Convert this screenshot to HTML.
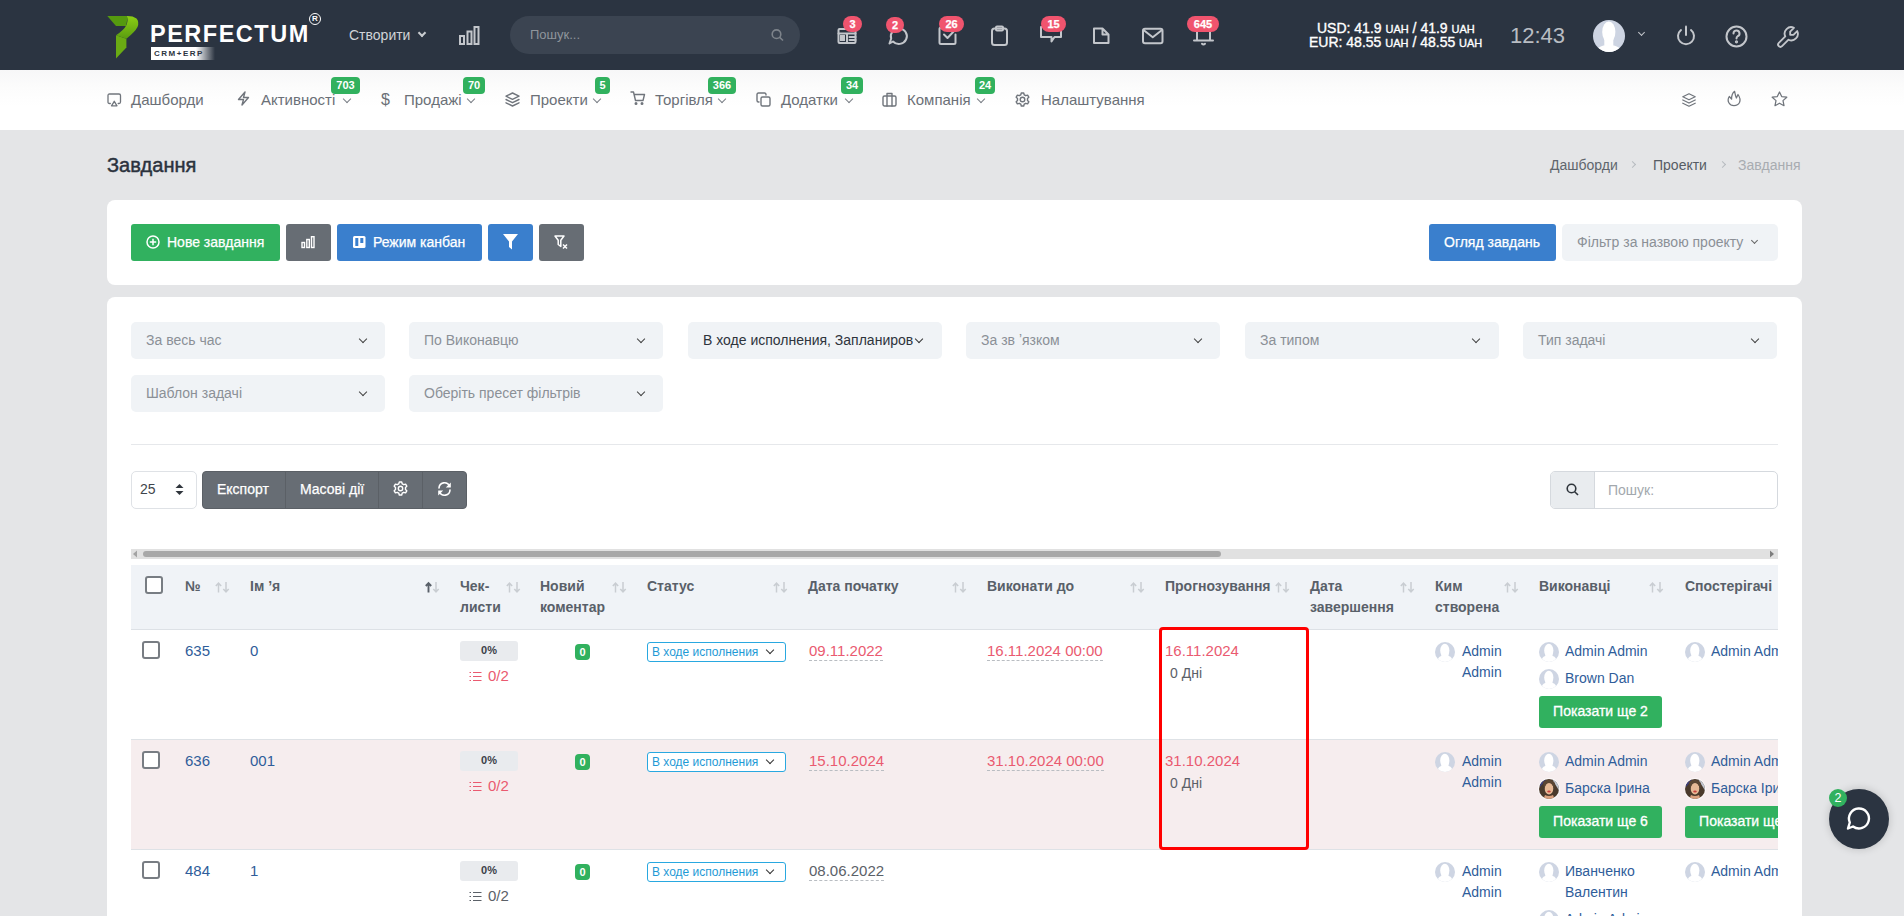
<!DOCTYPE html>
<html><head><meta charset="utf-8">
<style>
*{box-sizing:border-box;margin:0;padding:0}
html,body{width:1904px;height:916px;overflow:hidden}
body{font-family:"Liberation Sans",sans-serif;background:#e4e5e7;position:relative;color:#3f4750;font-size:14px}
.a{position:absolute;white-space:nowrap}
svg{position:absolute;overflow:visible}
#hdr{position:absolute;left:0;top:0;width:1904px;height:70px;background:#2b3441}
#nav{position:absolute;left:0;top:70px;width:1904px;height:60px;background:linear-gradient(#f7f7f8,#fcfcfc 30%,#fff 60%)}
.card{position:absolute;background:#fff;border-radius:8px}
.btn{position:absolute;height:37px;border-radius:3px;color:#fff;font-size:14px;line-height:37px}
.sel{position:absolute;height:37px;width:254px;background:#f0f3f6;border-radius:5px;color:#8b9096;font-size:14px;line-height:37px;padding-left:15px;white-space:nowrap;overflow:hidden}
.chev{position:absolute;width:6px;height:6px;border-right:1.6px solid #444;border-bottom:1.6px solid #444;transform:rotate(45deg)}
.rb{position:absolute;background:#f0546e;color:#fff;font-size:11px;font-weight:bold;-webkit-text-stroke:.25px #fff;height:16px;line-height:16px;border-radius:8px;text-align:center}
.gb{position:absolute;background:#31b15e;color:#fff;font-size:11px;font-weight:bold;height:17px;line-height:17px;border-radius:4px;text-align:center}
.nt{position:absolute;top:90px;font-size:15px;color:#6b7077;line-height:20px;white-space:nowrap}
.ni{position:absolute;top:92px}
.hi{stroke:#c3c6cb;fill:none;stroke-width:2;stroke-linecap:round;stroke-linejoin:round}
.ns{stroke:#70757c;fill:none;stroke-width:1.4;stroke-linecap:round;stroke-linejoin:round}
</style></head>
<body>
<div id="hdr"></div>
<div id="nav"></div>

<!-- ============ HEADER ============ -->
<!-- logo -->
<svg style="left:104px;top:12px" width="40" height="50" viewBox="0 0 40 50">
  <defs><linearGradient id="lg1" x1="0" y1="0" x2="0" y2="1"><stop offset="0" stop-color="#8ccf14"/><stop offset="1" stop-color="#5a9c10"/></linearGradient></defs>
  <path d="M3.3 4.1 L24 4.1 L22 13.9 L12 13.9 Z" fill="#559a0f"/>
  <path d="M12 23.2 L22.4 26.7 L22.4 35.5 L12 46.6 Z" fill="#6aab13"/>
  <path d="M23 4.1 Q29 4 32.5 6.5 Q35.5 10 33.5 15 Q31 20 22.4 26.7 L12 23.2 Q20 18 22.5 13 Q24.5 8 23 4.1 Z" fill="url(#lg1)"/>
</svg>
<div class="a" style="left:150px;top:22px;font-size:23.5px;font-weight:bold;color:#fff;letter-spacing:1.5px;line-height:24px">PERFECTUM</div>
<div class="a" style="left:309px;top:13px;width:12px;height:12px;border:1.5px solid #fff;border-radius:50%;font-size:8px;color:#fff;text-align:center;line-height:9px;font-weight:bold">R</div>
<div class="a" style="left:151px;top:47px;width:64px;height:13px;background:linear-gradient(90deg,#fff 70%,rgba(255,255,255,0));"></div>
<div class="a" style="left:154px;top:47px;font-size:8px;font-weight:bold;color:#2b3441;letter-spacing:1.5px;line-height:13px">CRM+ERP</div>

<div class="a" style="left:349px;top:27px;font-size:14px;color:#d0d3d7;line-height:16px">Створити</div>
<div class="chev" style="left:419px;top:30px;width:6px;height:6px;border-color:#c9ccd0;border-width:2px"></div>
<!-- chart icon -->
<svg style="left:459px;top:26px" width="22" height="19" viewBox="0 0 22 19"><g fill="none" stroke="#c3c6cb" stroke-width="2"><rect x="1" y="10" width="4" height="8"/><rect x="8.5" y="5.5" width="4" height="12.5"/><rect x="15.5" y="1" width="4" height="17"/></g></svg>
<!-- search -->
<div class="a" style="left:510px;top:16px;width:290px;height:38px;border-radius:19px;background:#3b4451"></div>
<div class="a" style="left:530px;top:27px;font-size:13px;color:#8f959c;line-height:16px">Пошук...</div>
<svg style="left:771px;top:29px" width="14" height="12" viewBox="0 0 14 12"><circle cx="5.5" cy="5.2" r="4.3" fill="none" stroke="#7d838a" stroke-width="1.6"/><path d="M8.7 8.4 L12 11.5" stroke="#7d838a" stroke-width="1.6"/></svg>

<!-- header icons -->
<svg style="left:837px;top:26px" width="20" height="18" viewBox="0 0 20 18"><g class="hi"><rect x="1.5" y="3" width="17" height="14" rx="1"/><path d="M1.5 7.5 H18.5 M10 7.5 V17 M12.5 11 H18.5 M12.5 14 H18.5"/><rect x="3" y="9" width="5" height="6" fill="#c3c6cb" stroke="none"/></g></svg>
<div class="rb" style="left:843px;top:16px;width:19px">3</div>
<svg style="left:888px;top:26px" width="20" height="19" viewBox="0 0 20 19"><path class="hi" d="M5 15.5 A8 7.8 0 1 0 3.2 12.5 L1.5 17.5 Z"/></svg>
<div class="rb" style="left:886px;top:17px;width:18px">2</div>
<svg style="left:938px;top:25px" width="20" height="20" viewBox="0 0 20 20"><g class="hi"><path d="M17.5 9.5 V17.5 Q17.5 19 16 19 H3 Q1.5 19 1.5 17.5 V4 Q1.5 2.5 3 2.5 H12"/><path d="M6 9.5 L9.5 13 L17 5"/></g></svg>
<div class="rb" style="left:939px;top:16px;width:25px">26</div>
<svg style="left:990px;top:25px" width="20" height="21" viewBox="0 0 20 21"><g class="hi"><rect x="2" y="3.5" width="15" height="16.5" rx="2.5"/><rect x="6" y="1.5" width="7" height="4" rx="1"/></g></svg>
<svg style="left:1039px;top:24px" width="24" height="22" viewBox="0 0 24 22"><g class="hi"><path d="M2 3 H22 V13 H15.5 L12.5 17.5 V13 H2 Z"/></g></svg>
<div class="rb" style="left:1041px;top:16px;width:25px">15</div>
<svg style="left:1092px;top:27px" width="19" height="19" viewBox="0 0 19 19"><g class="hi"><path d="M2 1.5 H10.5 L16.5 7.5 V16 H2 Z M10.5 1.5 V7.5 H16.5"/></g></svg>
<svg style="left:1141px;top:27px" width="23" height="18" viewBox="0 0 23 18"><g class="hi"><rect x="2" y="1.8" width="19.5" height="14.4" rx="2"/><path d="M2.5 3 L11.75 10.3 L21 3"/></g></svg>
<svg style="left:1192px;top:26px" width="23" height="20" viewBox="0 0 23 20"><g class="hi"><path d="M5 14 V5 M18 5 V14 M2 14.5 H21"/><path d="M10 17.8 Q11.5 19.3 13 17.8"/></g></svg>
<div class="rb" style="left:1187px;top:16px;width:32px">645</div>

<div class="a" style="left:1317px;top:20.5px;font-size:14px;color:#fff;line-height:15px;-webkit-text-stroke:.35px #fff">USD: 41.9 <span style="font-size:11px">UAH</span> / 41.9 <span style="font-size:11px">UAH</span></div>
<div class="a" style="left:1309px;top:35px;font-size:14px;color:#fff;line-height:15px;-webkit-text-stroke:.35px #fff">EUR: 48.55 <span style="font-size:11px">UAH</span> / 48.55 <span style="font-size:11px">UAH</span></div>
<div class="a" style="left:1510px;top:23.5px;font-size:22px;color:#b9bdc3;line-height:24px">12:43</div>
<!-- avatar -->
<svg style="left:1593px;top:20px" width="32" height="32" viewBox="0 0 32 32"><defs><clipPath id="hav"><circle cx="16" cy="16" r="16"/></clipPath></defs><g clip-path="url(#hav)"><rect width="32" height="32" fill="#cdd4e2"/><ellipse cx="15.8" cy="12" rx="6.6" ry="10.5" fill="#fff"/><rect x="11.3" y="18" width="9" height="9" fill="#fff"/><path d="M2 33 Q4 27 10.5 25.5 L21 25.5 Q27.5 27 30 33 Z" fill="#fff"/></g></svg>
<div class="chev" style="left:1639px;top:30px;width:5px;height:5px;border-color:#c3c6cb"></div>
<svg style="left:1676px;top:25px" width="20" height="22" viewBox="0 0 20 22"><g class="hi"><path d="M10 1.5 V10"/><path d="M5 5 A8 8 0 1 0 15 5"/></g></svg>
<svg style="left:1725px;top:25px" width="23" height="23" viewBox="0 0 23 23"><g class="hi"><circle cx="11.5" cy="11.5" r="10"/><path d="M8.5 8.5 A3 3 0 1 1 12.5 11.3 Q11.5 11.8 11.5 13.5"/><circle cx="11.5" cy="16.8" r=".6" fill="#c3c6cb"/></g></svg>
<svg style="left:1775px;top:24px" width="26" height="26" viewBox="0 0 24 24"><g transform="translate(24,0) scale(-1,1)"><path d="M7 10h3v-3l-3.5 -3.5a6 6 0 0 1 8 8l6 6a2 2 0 0 1 -3 3l-6 -6a6 6 0 0 1 -8 -8l3.5 3.5" fill="none" stroke="#c3c6cb" stroke-width="1.7" stroke-linejoin="round" stroke-linecap="round"/></g></svg>

<!-- ============ NAV ============ -->
<svg class="ni" style="left:107px;top:92.7px" width="15" height="14" viewBox="0 0 15 14"><g class="ns" style="stroke-width:1.3"><path d="M3.3 10.5 H2.5 Q1 10.5 1 9 V2.5 Q1 1 2.5 1 H12 Q13.5 1 13.5 2.5 V9 Q13.5 10.5 12 10.5 H11.2"/><path d="M7.25 8.3 L10 12.8 H4.5 Z"/></g></svg>
<div class="nt" style="left:131px">Дашборди</div>
<svg class="ni" style="left:237px;top:91px" width="13" height="15" viewBox="0 0 13 15"><path class="ns" d="M8 1 L1.5 8.5 H6.5 L5 14 L11.5 6.5 H6.5 Z"/></svg>
<div class="nt" style="left:261px">Активності</div>
<div class="chev" style="left:344px;top:96px;width:6px;height:6px;border-color:#7a7f86;border-width:1.1px"></div>
<div class="gb" style="left:331px;top:77px;width:29px">703</div>
<div class="nt" style="left:381px;font-size:16px">$</div>
<div class="nt" style="left:404px">Продажі</div>
<div class="chev" style="left:468px;top:96px;width:6px;height:6px;border-color:#7a7f86;border-width:1.1px"></div>
<div class="gb" style="left:463px;top:77px;width:22px">70</div>
<svg class="ni" style="left:505px;top:92px" width="15" height="15" viewBox="0 0 15 15"><g class="ns"><path d="M7.5 1 L14 4.2 L7.5 7.4 L1 4.2 Z"/><path d="M1 7.5 L7.5 10.7 L14 7.5"/><path d="M1 10.8 L7.5 14 L14 10.8"/></g></svg>
<div class="nt" style="left:530px">Проекти</div>
<div class="chev" style="left:594px;top:96px;width:6px;height:6px;border-color:#7a7f86;border-width:1.1px"></div>
<div class="gb" style="left:595px;top:77px;width:15px">5</div>
<svg class="ni" style="left:630px;top:91px" width="16" height="14" viewBox="0 0 16 14"><g class="ns"><path d="M1 1 H3.5 L5.5 9.5 H13 L14.5 3.5 H4.3"/><circle cx="6" cy="12.5" r=".8" fill="#70757c"/><circle cx="12" cy="12.5" r=".8" fill="#70757c"/></g></svg>
<div class="nt" style="left:655px">Торгівля</div>
<div class="chev" style="left:719px;top:96px;width:6px;height:6px;border-color:#7a7f86;border-width:1.1px"></div>
<div class="gb" style="left:708px;top:77px;width:28px">366</div>
<svg class="ni" style="left:756px;top:92px" width="15" height="15" viewBox="0 0 15 15"><g class="ns"><rect x="5" y="5" width="9" height="9" rx="1.5"/><path d="M10 3 V2.5 Q10 1 8.5 1 H2.5 Q1 1 1 2.5 V8.5 Q1 10 2.5 10 H3"/></g></svg>
<div class="nt" style="left:781px">Додатки</div>
<div class="chev" style="left:846px;top:96px;width:6px;height:6px;border-color:#7a7f86;border-width:1.1px"></div>
<div class="gb" style="left:841px;top:77px;width:22px">34</div>
<svg class="ni" style="left:882px;top:92px" width="15" height="15" viewBox="0 0 15 15"><g class="ns"><rect x="1" y="4" width="13" height="10" rx="1.5"/><path d="M5 14 V1.5 H10 V14"/></g></svg>
<div class="nt" style="left:907px">Компанія</div>
<div class="chev" style="left:978px;top:96px;width:6px;height:6px;border-color:#7a7f86;border-width:1.1px"></div>
<div class="gb" style="left:975px;top:77px;width:20px">24</div>
<svg class="ni" style="left:1015px;top:92px" width="15" height="15" viewBox="0 0 15 15"><g class="ns"><circle cx="7.5" cy="7.5" r="2.3"/><path d="M6.3 1 H8.7 L9.2 2.8 L10.8 3.7 L12.6 3.1 L13.8 5.2 L12.5 6.5 V8.5 L13.8 9.8 L12.6 11.9 L10.8 11.3 L9.2 12.2 L8.7 14 H6.3 L5.8 12.2 L4.2 11.3 L2.4 11.9 L1.2 9.8 L2.5 8.5 V6.5 L1.2 5.2 L2.4 3.1 L4.2 3.7 L5.8 2.8 Z"/></g></svg>
<div class="nt" style="left:1041px">Налаштування</div>
<!-- nav right icons -->
<svg style="left:1682px;top:92.5px" width="14" height="14" viewBox="0 0 14 14"><g class="ns" style="stroke-width:1.25"><path d="M7 0.8 L13.2 3.8 L7 6.8 L0.8 3.8 Z"/><path d="M0.8 7 L7 10 L13.2 7"/><path d="M0.8 10.2 L7 13.2 L13.2 10.2"/></g></svg>
<svg style="left:1722px;top:86px" width="24" height="24" viewBox="0 0 24 24"><path d="M12.6 5.3 C10.5 7 9.5 10 9.6 13.2 L7.3 10.5 C6 12.5 5.8 15 7 17 C8 18.8 10 19.6 12 19.6 C14.5 19.6 16.5 18.5 17.5 16.5 C18.3 14.5 17.8 11 16 8.5 L14.4 12 C13.5 10 13 7.5 12.6 5.3 Z" fill="none" stroke="#70757c" stroke-width="1.25" stroke-linejoin="round" stroke-linecap="round"/></svg>
<svg style="left:1770.5px;top:91px" width="17" height="16" viewBox="0 0 17 16"><path class="ns" style="stroke-width:1.25" d="M8.5 1 L10.7 5.6 L15.8 6.2 L12 9.6 L13 14.7 L8.5 12.2 L4 14.7 L5 9.6 L1.2 6.2 L6.3 5.6 Z"/></svg>

<!-- ============ PAGE TITLE ============ -->
<div class="a" style="left:107px;top:154px;font-size:20px;color:#2b323d;line-height:22px;-webkit-text-stroke:.45px #2b323d">Завдання</div>
<div class="a" style="left:1550px;top:157px;font-size:14px;color:#60666d;line-height:16px">Дашборди</div>
<div class="chev" style="left:1630px;top:162px;width:5px;height:5px;border-color:#b7bbc0;border-width:1px;transform:rotate(-45deg)"></div>
<div class="a" style="left:1653px;top:157px;font-size:14px;color:#565c64;line-height:16px">Проекти</div>
<div class="chev" style="left:1720px;top:162px;width:5px;height:5px;border-color:#b7bbc0;border-width:1px;transform:rotate(-45deg)"></div>
<div class="a" style="left:1738px;top:157px;font-size:14px;color:#a8acb1;line-height:16px">Завдання</div>

<!-- ============ CARD 1 ============ -->
<div class="card" style="left:107px;top:200px;width:1695px;height:85px"></div>
<div class="btn" style="left:131px;top:224px;width:149px;background:#31b15f"></div>
<svg style="left:146px;top:235px" width="14" height="14" viewBox="0 0 14 14"><g fill="none" stroke="#fff" stroke-width="1.5"><circle cx="7" cy="7" r="6"/><path d="M7 3.8 V10.2 M3.8 7 H10.2"/></g></svg>
<div class="a" style="left:167px;top:234px;font-size:14px;color:#fff;line-height:16px;-webkit-text-stroke:.25px #fff">Нове завдання</div>
<div class="btn" style="left:286px;top:224px;width:45px;background:#676d74"></div>
<svg style="left:301px;top:236px" width="14" height="12" viewBox="0 0 14 12"><g fill="none" stroke="#fff" stroke-width="1.4"><rect x="1" y="6.5" width="2.5" height="5"/><rect x="5.8" y="3.5" width="2.5" height="8"/><rect x="10.5" y="0.7" width="2.5" height="10.8"/></g></svg>
<div class="btn" style="left:337px;top:224px;width:145px;background:#3a7fcd"></div>
<svg style="left:353px;top:236px" width="13" height="12" viewBox="0 0 13 12"><rect x="0" y="0" width="12.5" height="12" rx="1.5" fill="#fff"/><rect x="2.3" y="2" width="3" height="8" fill="#3a7fcd"/><rect x="7.3" y="2" width="3" height="5" fill="#3a7fcd"/></svg>
<div class="a" style="left:373px;top:234px;font-size:14px;color:#fff;line-height:16px;-webkit-text-stroke:.25px #fff">Режим канбан</div>
<div class="btn" style="left:488px;top:224px;width:45px;background:#3a7fcd"></div>
<svg style="left:503px;top:234px" width="15" height="16" viewBox="0 0 15 16"><path d="M0 0 H15 L9 7.5 V15.5 L6 13 V7.5 Z" fill="#fff"/></svg>
<div class="btn" style="left:539px;top:224px;width:45px;background:#676d74"></div>
<svg style="left:554px;top:235px" width="15" height="15" viewBox="0 0 15 15"><g fill="none" stroke="#fff" stroke-width="1.5" stroke-linejoin="round"><path d="M1 1 H10 L6.8 5.2 V11.5 L4.2 9.5 V5.2 Z"/><path d="M9 9.5 L13 13.5 M13 9.5 L9 13.5"/></g></svg>

<div class="btn" style="left:1429px;top:224px;width:127px;background:#3a7fcd"></div>
<div class="a" style="left:1444px;top:234px;font-size:14px;color:#fff;line-height:16px;-webkit-text-stroke:.25px #fff">Огляд завдань</div>
<div class="sel" style="left:1562px;top:224px;width:216px;color:#8b9096">Фільтр за назвою проекту</div>
<div class="chev" style="left:1752px;top:238px;width:5px;height:5px;border-color:#666;border-width:1.3px"></div>

<!-- ============ CARD 2 ============ -->
<div class="card" style="left:107px;top:297px;width:1695px;height:700px"></div>
<div class="sel" style="left:131px;top:322px">За весь час</div><div class="chev" style="left:360px;top:336px"></div>
<div class="sel" style="left:409px;top:322px">По Виконавцю</div><div class="chev" style="left:638px;top:336px"></div>
<div class="sel" style="left:688px;top:322px;color:#2e343c">В ходе исполнения, Запланиров</div><div class="chev" style="left:916px;top:336px;border-color:#333"></div>
<div class="sel" style="left:966px;top:322px">За зв ʼязком</div><div class="chev" style="left:1195px;top:336px"></div>
<div class="sel" style="left:1245px;top:322px">За типом</div><div class="chev" style="left:1473px;top:336px"></div>
<div class="sel" style="left:1523px;top:322px">Тип задачі</div><div class="chev" style="left:1752px;top:336px"></div>
<div class="sel" style="left:131px;top:375px">Шаблон задачі</div><div class="chev" style="left:360px;top:389px"></div>
<div class="sel" style="left:409px;top:375px">Оберіть пресет фільтрів</div><div class="chev" style="left:638px;top:389px"></div>
<div class="a" style="left:131px;top:444px;width:1647px;height:1px;background:#e6e8eb"></div>

<!-- toolbar -->
<div class="a" style="left:131px;top:471px;width:66px;height:38px;border:1px solid #dfe2e6;border-radius:5px;background:#fff"></div>
<div class="a" style="left:140px;top:481px;font-size:14px;color:#3f454c;line-height:16px">25</div>
<svg style="left:175px;top:484px" width="9" height="11" viewBox="0 0 9 11"><path d="M4.5 0 L8.5 4 H0.5 Z M4.5 11 L8.5 7 H0.5 Z" fill="#2f353c"/></svg>
<div class="a" style="left:202px;top:471px;width:265px;height:38px;background:#676d74;border-radius:4px;border:1px solid #5b6066"></div>
<div class="a" style="left:285px;top:471px;width:1px;height:38px;background:#5b6066"></div>
<div class="a" style="left:378px;top:471px;width:1px;height:38px;background:#5b6066"></div>
<div class="a" style="left:422px;top:471px;width:1px;height:38px;background:#5b6066"></div>
<div class="a" style="left:217px;top:481px;font-size:14px;color:#fff;line-height:16px;-webkit-text-stroke:.25px #fff">Експорт</div>
<div class="a" style="left:300px;top:481px;font-size:14px;color:#fff;line-height:16px;-webkit-text-stroke:.25px #fff">Масові дії</div>
<svg style="left:393px;top:481px" width="15" height="15" viewBox="0 0 15 15"><g fill="none" stroke="#fff" stroke-width="1.4" stroke-linejoin="round"><circle cx="7.5" cy="7.5" r="2.2"/><path d="M6.3 1 H8.7 L9.2 2.8 L10.8 3.7 L12.6 3.1 L13.8 5.2 L12.5 6.5 V8.5 L13.8 9.8 L12.6 11.9 L10.8 11.3 L9.2 12.2 L8.7 14 H6.3 L5.8 12.2 L4.2 11.3 L2.4 11.9 L1.2 9.8 L2.5 8.5 V6.5 L1.2 5.2 L2.4 3.1 L4.2 3.7 L5.8 2.8 Z"/></g></svg>
<svg style="left:437px;top:482px" width="15" height="14" viewBox="0 0 15 14"><g fill="none" stroke="#fff" stroke-width="1.6" stroke-linecap="round"><path d="M2 6 A5.5 5.5 0 0 1 12.5 4"/><path d="M13 8 A5.5 5.5 0 0 1 2.5 10"/></g><path d="M13.8 0.5 V5.5 H8.8 Z M1.2 13.5 V8.5 H6.2 Z" fill="#fff"/></svg>

<div class="a" style="left:1550px;top:471px;width:228px;height:38px;border:1px solid #d5d9de;border-radius:5px;background:#fff;overflow:hidden">
  <div class="a" style="left:0;top:0;width:44px;height:36px;background:#e9ecef;border-right:1px solid #d5d9de"></div>
</div>
<svg style="left:1566px;top:483px" width="13" height="13" viewBox="0 0 13 13"><circle cx="5.5" cy="5.5" r="4.3" fill="none" stroke="#2f353c" stroke-width="1.6"/><path d="M8.7 8.7 L12 12" stroke="#2f353c" stroke-width="1.6"/></svg>
<div class="a" style="left:1608px;top:482px;font-size:14px;color:#a3a8ad;line-height:16px">Пошук:</div>

<!-- scrollbar -->
<div class="a" style="left:131px;top:549px;width:1647px;height:10px;background:#e1e1e1"></div>
<div class="a" style="left:143px;top:551px;width:1078px;height:6px;background:#a8a8a8;border-radius:3px"></div>
<svg style="left:132px;top:550px" width="6" height="8" viewBox="0 0 6 8"><path d="M5 0.5 V7.5 L1 4 Z" fill="#a3a3a3"/></svg>
<svg style="left:1769px;top:550px" width="6" height="8" viewBox="0 0 6 8"><path d="M1 0.5 V7.5 L5 4 Z" fill="#7d7d7d"/></svg>

<!-- TABLE -->
<div class="a" style="left:131px;top:565px;width:1647px;height:65px;background:#f0f3f7;border-bottom:1px solid #dde1e6"></div>
<!-- TABLE_HEAD -->
<div class="a" style="left:145px;top:576px;width:18px;height:18px;border:2px solid #787d83;border-radius:3px;background:#fff"></div>
<div class="a" style="left:185px;top:576px;font-size:14px;font-weight:bold;color:#596069;line-height:21px">№</div>
<svg style="left:215px;top:582px" width="15" height="11" viewBox="0 0 15 11"><g fill="none" stroke-width="1.5"><path d="M3.5 10.5 V1.2 M0.8 4 L3.5 1.2 L6.2 4" stroke="#c9cdd2" stroke-width="1.5"/><path d="M11 0 V9.8 M8.3 7 L11 9.8 L13.7 7" stroke="#c9cdd2"/></g></svg>
<div class="a" style="left:250px;top:576px;font-size:14px;font-weight:bold;color:#596069;line-height:21px">Ім ʼя</div>
<svg style="left:425px;top:582px" width="15" height="11" viewBox="0 0 15 11"><g fill="none" stroke-width="1.5"><path d="M3.5 10.5 V1.2 M0.8 4 L3.5 1.2 L6.2 4" stroke="#596069" stroke-width="1.9"/><path d="M11 0 V9.8 M8.3 7 L11 9.8 L13.7 7" stroke="#c9cdd2"/></g></svg>
<div class="a" style="left:460px;top:576px;font-size:14px;font-weight:bold;color:#596069;line-height:21px">Чек-<br>листи</div>
<svg style="left:506px;top:582px" width="15" height="11" viewBox="0 0 15 11"><g fill="none" stroke-width="1.5"><path d="M3.5 10.5 V1.2 M0.8 4 L3.5 1.2 L6.2 4" stroke="#c9cdd2" stroke-width="1.5"/><path d="M11 0 V9.8 M8.3 7 L11 9.8 L13.7 7" stroke="#c9cdd2"/></g></svg>
<div class="a" style="left:540px;top:576px;font-size:14px;font-weight:bold;color:#596069;line-height:21px">Новий<br>коментар</div>
<svg style="left:612px;top:582px" width="15" height="11" viewBox="0 0 15 11"><g fill="none" stroke-width="1.5"><path d="M3.5 10.5 V1.2 M0.8 4 L3.5 1.2 L6.2 4" stroke="#c9cdd2" stroke-width="1.5"/><path d="M11 0 V9.8 M8.3 7 L11 9.8 L13.7 7" stroke="#c9cdd2"/></g></svg>
<div class="a" style="left:647px;top:576px;font-size:14px;font-weight:bold;color:#596069;line-height:21px">Статус</div>
<svg style="left:773px;top:582px" width="15" height="11" viewBox="0 0 15 11"><g fill="none" stroke-width="1.5"><path d="M3.5 10.5 V1.2 M0.8 4 L3.5 1.2 L6.2 4" stroke="#c9cdd2" stroke-width="1.5"/><path d="M11 0 V9.8 M8.3 7 L11 9.8 L13.7 7" stroke="#c9cdd2"/></g></svg>
<div class="a" style="left:808px;top:576px;font-size:14px;font-weight:bold;color:#596069;line-height:21px">Дата початку</div>
<svg style="left:952px;top:582px" width="15" height="11" viewBox="0 0 15 11"><g fill="none" stroke-width="1.5"><path d="M3.5 10.5 V1.2 M0.8 4 L3.5 1.2 L6.2 4" stroke="#c9cdd2" stroke-width="1.5"/><path d="M11 0 V9.8 M8.3 7 L11 9.8 L13.7 7" stroke="#c9cdd2"/></g></svg>
<div class="a" style="left:987px;top:576px;font-size:14px;font-weight:bold;color:#596069;line-height:21px">Виконати до</div>
<svg style="left:1130px;top:582px" width="15" height="11" viewBox="0 0 15 11"><g fill="none" stroke-width="1.5"><path d="M3.5 10.5 V1.2 M0.8 4 L3.5 1.2 L6.2 4" stroke="#c9cdd2" stroke-width="1.5"/><path d="M11 0 V9.8 M8.3 7 L11 9.8 L13.7 7" stroke="#c9cdd2"/></g></svg>
<div class="a" style="left:1165px;top:576px;font-size:14px;font-weight:bold;color:#596069;line-height:21px">Прогнозування</div>
<svg style="left:1275px;top:582px" width="15" height="11" viewBox="0 0 15 11"><g fill="none" stroke-width="1.5"><path d="M3.5 10.5 V1.2 M0.8 4 L3.5 1.2 L6.2 4" stroke="#c9cdd2" stroke-width="1.5"/><path d="M11 0 V9.8 M8.3 7 L11 9.8 L13.7 7" stroke="#c9cdd2"/></g></svg>
<div class="a" style="left:1310px;top:576px;font-size:14px;font-weight:bold;color:#596069;line-height:21px">Дата<br>завершення</div>
<svg style="left:1400px;top:582px" width="15" height="11" viewBox="0 0 15 11"><g fill="none" stroke-width="1.5"><path d="M3.5 10.5 V1.2 M0.8 4 L3.5 1.2 L6.2 4" stroke="#c9cdd2" stroke-width="1.5"/><path d="M11 0 V9.8 M8.3 7 L11 9.8 L13.7 7" stroke="#c9cdd2"/></g></svg>
<div class="a" style="left:1435px;top:576px;font-size:14px;font-weight:bold;color:#596069;line-height:21px">Ким<br>створена</div>
<svg style="left:1504px;top:582px" width="15" height="11" viewBox="0 0 15 11"><g fill="none" stroke-width="1.5"><path d="M3.5 10.5 V1.2 M0.8 4 L3.5 1.2 L6.2 4" stroke="#c9cdd2" stroke-width="1.5"/><path d="M11 0 V9.8 M8.3 7 L11 9.8 L13.7 7" stroke="#c9cdd2"/></g></svg>
<div class="a" style="left:1539px;top:576px;font-size:14px;font-weight:bold;color:#596069;line-height:21px">Виконавці</div>
<svg style="left:1649px;top:582px" width="15" height="11" viewBox="0 0 15 11"><g fill="none" stroke-width="1.5"><path d="M3.5 10.5 V1.2 M0.8 4 L3.5 1.2 L6.2 4" stroke="#c9cdd2" stroke-width="1.5"/><path d="M11 0 V9.8 M8.3 7 L11 9.8 L13.7 7" stroke="#c9cdd2"/></g></svg>
<div class="a" style="left:1685px;top:576px;font-size:14px;font-weight:bold;color:#596069;line-height:21px">Спостерігачі</div>
<div class="a" style="left:131px;top:630px;width:1647px;height:110px;border-bottom:1px solid #dee2e6"></div>
<div class="a" style="left:142px;top:641px;width:18px;height:18px;border:2px solid #787d83;border-radius:3px;background:#fff"></div>
<div class="a" style="left:185px;top:643px;font-size:15px;color:#2f5d9a;line-height:16px">635</div>
<div class="a" style="left:250px;top:643px;font-size:15px;color:#2f5d9a;line-height:16px">0</div>
<div class="a" style="left:460px;top:641px;width:58px;height:20px;background:#e9ebee;border-radius:3px;font-size:11px;font-weight:bold;color:#3a4048;text-align:center;line-height:18px">0%</div>
<svg style="left:469px;top:671px" width="13" height="11" viewBox="0 0 13 11"><g stroke="#ea5a70" stroke-width="1.2"><path d="M4 1.5 H12.5 M4 5.5 H12.5 M4 9.5 H12.5"/><path d="M0.5 1.5 H2 M0.5 5.5 H2 M0.5 9.5 H2"/></g></svg>
<div class="a" style="left:488px;top:668px;font-size:15px;color:#ea5a70;line-height:16px">0/2</div>
<div class="gb" style="left:575px;top:644px;width:15px;height:16px;line-height:16px;font-size:11px">0</div>
<div class="a" style="left:647px;top:642px;width:139px;height:20px;border:1.5px solid #29a8e0;border-radius:3px;background:#fff"></div>
<div class="a" style="left:652px;top:645px;font-size:12px;color:#1e9ad6;line-height:14px">В ходе исполнения</div>
<div class="chev" style="left:767px;top:647px;width:6px;height:6px;border-color:#333;border-width:1.4px"></div>
<div class="a" style="left:809px;top:643px;font-size:15px;color:#ea5a70;line-height:16px;border-bottom:1px dashed #b9bdc2;padding-bottom:1px">09.11.2022</div>
<div class="a" style="left:987px;top:643px;font-size:15px;color:#ea5a70;line-height:16px;border-bottom:1px dashed #b9bdc2;padding-bottom:1px">16.11.2024 00:00</div>
<div class="a" style="left:1165px;top:643px;font-size:15px;color:#ea5a70;line-height:16px">16.11.2024</div>
<div class="a" style="left:1170px;top:665px;font-size:14px;color:#5b6168;line-height:16px">0 Дні</div>
<svg style="left:1435px;top:642px" width="20" height="20" viewBox="0 0 20 20"><defs><clipPath id="cp1"><circle cx="10" cy="10" r="10"/></clipPath></defs><g clip-path="url(#cp1)"><rect width="20" height="20" fill="#ced5e3"/><ellipse cx="9.8" cy="8.6" rx="4.6" ry="6.8" fill="#fff"/><path d="M2 20 Q3 14.5 6.5 14 L13.5 14 Q17 14.5 18 20 Z" fill="#fff"/><rect x="6.5" y="11" width="7" height="5" fill="#fff"/></g></svg>
<div class="a" style="left:1462px;top:641px;font-size:14px;color:#2f5d9a;line-height:21px">Admin<br>Admin</div>
<svg style="left:1539px;top:642px" width="20" height="20" viewBox="0 0 20 20"><defs><clipPath id="cp2"><circle cx="10" cy="10" r="10"/></clipPath></defs><g clip-path="url(#cp2)"><rect width="20" height="20" fill="#ced5e3"/><ellipse cx="9.8" cy="8.6" rx="4.6" ry="6.8" fill="#fff"/><path d="M2 20 Q3 14.5 6.5 14 L13.5 14 Q17 14.5 18 20 Z" fill="#fff"/><rect x="6.5" y="11" width="7" height="5" fill="#fff"/></g></svg>
<div class="a" style="left:1565px;top:641px;font-size:14px;color:#2f5d9a;line-height:21px">Admin Admin</div>
<svg style="left:1539px;top:669px" width="20" height="20" viewBox="0 0 20 20"><defs><clipPath id="cp3"><circle cx="10" cy="10" r="10"/></clipPath></defs><g clip-path="url(#cp3)"><rect width="20" height="20" fill="#ced5e3"/><ellipse cx="9.8" cy="8.6" rx="4.6" ry="6.8" fill="#fff"/><path d="M2 20 Q3 14.5 6.5 14 L13.5 14 Q17 14.5 18 20 Z" fill="#fff"/><rect x="6.5" y="11" width="7" height="5" fill="#fff"/></g></svg>
<div class="a" style="left:1565px;top:668px;font-size:14px;color:#2f5d9a;line-height:21px">Brown Dan</div>
<div class="a" style="left:1539px;top:696px;width:123px;height:32px;background:#31b15f;border-radius:3px;color:#fff;font-size:14px;line-height:30px;text-align:center;-webkit-text-stroke:.3px #fff">Показати ще 2</div>
<div class="a" style="left:1685px;top:629px;width:93px;height:109px;overflow:hidden">
<svg style="left:0px;top:13px" width="20" height="20" viewBox="0 0 20 20"><defs><clipPath id="cp4"><circle cx="10" cy="10" r="10"/></clipPath></defs><g clip-path="url(#cp4)"><rect width="20" height="20" fill="#ced5e3"/><ellipse cx="9.8" cy="8.6" rx="4.6" ry="6.8" fill="#fff"/><path d="M2 20 Q3 14.5 6.5 14 L13.5 14 Q17 14.5 18 20 Z" fill="#fff"/><rect x="6.5" y="11" width="7" height="5" fill="#fff"/></g></svg>
<div class="a" style="left:26px;top:12px;font-size:14px;color:#2f5d9a;line-height:21px">Admin Admin</div>
</div>
<div class="a" style="left:131px;top:740px;width:1647px;height:110px;background:#f6edee;border-bottom:1px solid #dee2e6"></div>
<div class="a" style="left:142px;top:751px;width:18px;height:18px;border:2px solid #787d83;border-radius:3px;background:#fff"></div>
<div class="a" style="left:185px;top:753px;font-size:15px;color:#2f5d9a;line-height:16px">636</div>
<div class="a" style="left:250px;top:753px;font-size:15px;color:#2f5d9a;line-height:16px">001</div>
<div class="a" style="left:460px;top:751px;width:58px;height:20px;background:#e9ebee;border-radius:3px;font-size:11px;font-weight:bold;color:#3a4048;text-align:center;line-height:18px">0%</div>
<svg style="left:469px;top:781px" width="13" height="11" viewBox="0 0 13 11"><g stroke="#ea5a70" stroke-width="1.2"><path d="M4 1.5 H12.5 M4 5.5 H12.5 M4 9.5 H12.5"/><path d="M0.5 1.5 H2 M0.5 5.5 H2 M0.5 9.5 H2"/></g></svg>
<div class="a" style="left:488px;top:778px;font-size:15px;color:#ea5a70;line-height:16px">0/2</div>
<div class="gb" style="left:575px;top:754px;width:15px;height:16px;line-height:16px;font-size:11px">0</div>
<div class="a" style="left:647px;top:752px;width:139px;height:20px;border:1.5px solid #29a8e0;border-radius:3px;background:#fff"></div>
<div class="a" style="left:652px;top:755px;font-size:12px;color:#1e9ad6;line-height:14px">В ходе исполнения</div>
<div class="chev" style="left:767px;top:757px;width:6px;height:6px;border-color:#333;border-width:1.4px"></div>
<div class="a" style="left:809px;top:753px;font-size:15px;color:#ea5a70;line-height:16px;border-bottom:1px dashed #b9bdc2;padding-bottom:1px">15.10.2024</div>
<div class="a" style="left:987px;top:753px;font-size:15px;color:#ea5a70;line-height:16px;border-bottom:1px dashed #b9bdc2;padding-bottom:1px">31.10.2024 00:00</div>
<div class="a" style="left:1165px;top:753px;font-size:15px;color:#ea5a70;line-height:16px">31.10.2024</div>
<div class="a" style="left:1170px;top:775px;font-size:14px;color:#5b6168;line-height:16px">0 Дні</div>
<svg style="left:1435px;top:752px" width="20" height="20" viewBox="0 0 20 20"><defs><clipPath id="cp5"><circle cx="10" cy="10" r="10"/></clipPath></defs><g clip-path="url(#cp5)"><rect width="20" height="20" fill="#ced5e3"/><ellipse cx="9.8" cy="8.6" rx="4.6" ry="6.8" fill="#fff"/><path d="M2 20 Q3 14.5 6.5 14 L13.5 14 Q17 14.5 18 20 Z" fill="#fff"/><rect x="6.5" y="11" width="7" height="5" fill="#fff"/></g></svg>
<div class="a" style="left:1462px;top:751px;font-size:14px;color:#2f5d9a;line-height:21px">Admin<br>Admin</div>
<svg style="left:1539px;top:752px" width="20" height="20" viewBox="0 0 20 20"><defs><clipPath id="cp6"><circle cx="10" cy="10" r="10"/></clipPath></defs><g clip-path="url(#cp6)"><rect width="20" height="20" fill="#ced5e3"/><ellipse cx="9.8" cy="8.6" rx="4.6" ry="6.8" fill="#fff"/><path d="M2 20 Q3 14.5 6.5 14 L13.5 14 Q17 14.5 18 20 Z" fill="#fff"/><rect x="6.5" y="11" width="7" height="5" fill="#fff"/></g></svg>
<div class="a" style="left:1565px;top:751px;font-size:14px;color:#2f5d9a;line-height:21px">Admin Admin</div>
<svg style="left:1538px;top:778px" width="22" height="22" viewBox="0 0 22 22"><defs><clipPath id="cp7"><circle cx="11" cy="11" r="10"/></clipPath></defs><circle cx="11" cy="11" r="11" fill="#fff" opacity=".6"/><g clip-path="url(#cp7)"><rect width="22" height="22" fill="#4a3a2c"/><path d="M14 1 L22 0 L22 14 Z" fill="#c3c8d2"/><path d="M1 2 Q5 0 8 2 L2 9 Z" fill="#3d3f7a"/><ellipse cx="11" cy="10.5" rx="4.3" ry="6" fill="#e7b996"/><ellipse cx="11" cy="13.5" rx="1.8" ry=".9" fill="#c8443e"/><path d="M7 17 Q11 19 15 17 L17 22 H5 Z" fill="#d9a07e"/><path d="M5 4 Q11 -1 17 5 L16 12 Q15 5 11 5 Q7 5 6.5 12 Z" fill="#5b4634"/></g></svg>
<div class="a" style="left:1565px;top:778px;font-size:14px;color:#2f5d9a;line-height:21px">Барска Ірина</div>
<div class="a" style="left:1539px;top:806px;width:123px;height:32px;background:#31b15f;border-radius:3px;color:#fff;font-size:14px;line-height:30px;text-align:center;-webkit-text-stroke:.3px #fff">Показати ще 6</div>
<div class="a" style="left:1685px;top:739px;width:93px;height:109px;overflow:hidden">
<svg style="left:0px;top:13px" width="20" height="20" viewBox="0 0 20 20"><defs><clipPath id="cp8"><circle cx="10" cy="10" r="10"/></clipPath></defs><g clip-path="url(#cp8)"><rect width="20" height="20" fill="#ced5e3"/><ellipse cx="9.8" cy="8.6" rx="4.6" ry="6.8" fill="#fff"/><path d="M2 20 Q3 14.5 6.5 14 L13.5 14 Q17 14.5 18 20 Z" fill="#fff"/><rect x="6.5" y="11" width="7" height="5" fill="#fff"/></g></svg>
<div class="a" style="left:26px;top:12px;font-size:14px;color:#2f5d9a;line-height:21px">Admin Admin</div>
<svg style="left:-1px;top:39px" width="22" height="22" viewBox="0 0 22 22"><defs><clipPath id="cp9"><circle cx="11" cy="11" r="10"/></clipPath></defs><circle cx="11" cy="11" r="11" fill="#fff" opacity=".6"/><g clip-path="url(#cp9)"><rect width="22" height="22" fill="#4a3a2c"/><path d="M14 1 L22 0 L22 14 Z" fill="#c3c8d2"/><path d="M1 2 Q5 0 8 2 L2 9 Z" fill="#3d3f7a"/><ellipse cx="11" cy="10.5" rx="4.3" ry="6" fill="#e7b996"/><ellipse cx="11" cy="13.5" rx="1.8" ry=".9" fill="#c8443e"/><path d="M7 17 Q11 19 15 17 L17 22 H5 Z" fill="#d9a07e"/><path d="M5 4 Q11 -1 17 5 L16 12 Q15 5 11 5 Q7 5 6.5 12 Z" fill="#5b4634"/></g></svg>
<div class="a" style="left:26px;top:39px;font-size:14px;color:#2f5d9a;line-height:21px">Барска Ірина</div>
<div class="a" style="left:0;top:67px;width:123px;height:32px;background:#31b15f;border-radius:3px;color:#fff;font-size:14px;line-height:30px;text-align:center;-webkit-text-stroke:.3px #fff">Показати ще 6</div>
</div>
<div class="a" style="left:131px;top:850px;width:1647px;height:110px;border-bottom:1px solid #dee2e6"></div>
<div class="a" style="left:142px;top:861px;width:18px;height:18px;border:2px solid #787d83;border-radius:3px;background:#fff"></div>
<div class="a" style="left:185px;top:863px;font-size:15px;color:#2f5d9a;line-height:16px">484</div>
<div class="a" style="left:250px;top:863px;font-size:15px;color:#2f5d9a;line-height:16px">1</div>
<div class="a" style="left:460px;top:861px;width:58px;height:20px;background:#e9ebee;border-radius:3px;font-size:11px;font-weight:bold;color:#3a4048;text-align:center;line-height:18px">0%</div>
<svg style="left:469px;top:891px" width="13" height="11" viewBox="0 0 13 11"><g stroke="#5b6168" stroke-width="1.2"><path d="M4 1.5 H12.5 M4 5.5 H12.5 M4 9.5 H12.5"/><path d="M0.5 1.5 H2 M0.5 5.5 H2 M0.5 9.5 H2"/></g></svg>
<div class="a" style="left:488px;top:888px;font-size:15px;color:#5b6168;line-height:16px">0/2</div>
<div class="gb" style="left:575px;top:864px;width:15px;height:16px;line-height:16px;font-size:11px">0</div>
<div class="a" style="left:647px;top:862px;width:139px;height:20px;border:1.5px solid #29a8e0;border-radius:3px;background:#fff"></div>
<div class="a" style="left:652px;top:865px;font-size:12px;color:#1e9ad6;line-height:14px">В ходе исполнения</div>
<div class="chev" style="left:767px;top:867px;width:6px;height:6px;border-color:#333;border-width:1.4px"></div>
<div class="a" style="left:809px;top:863px;font-size:15px;color:#5b6168;line-height:16px;border-bottom:1px dashed #b9bdc2;padding-bottom:1px">08.06.2022</div>
<svg style="left:1435px;top:862px" width="20" height="20" viewBox="0 0 20 20"><defs><clipPath id="cp10"><circle cx="10" cy="10" r="10"/></clipPath></defs><g clip-path="url(#cp10)"><rect width="20" height="20" fill="#ced5e3"/><ellipse cx="9.8" cy="8.6" rx="4.6" ry="6.8" fill="#fff"/><path d="M2 20 Q3 14.5 6.5 14 L13.5 14 Q17 14.5 18 20 Z" fill="#fff"/><rect x="6.5" y="11" width="7" height="5" fill="#fff"/></g></svg>
<div class="a" style="left:1462px;top:861px;font-size:14px;color:#2f5d9a;line-height:21px">Admin<br>Admin</div>
<svg style="left:1539px;top:862px" width="20" height="20" viewBox="0 0 20 20"><defs><clipPath id="cp11"><circle cx="10" cy="10" r="10"/></clipPath></defs><g clip-path="url(#cp11)"><rect width="20" height="20" fill="#ced5e3"/><ellipse cx="9.8" cy="8.6" rx="4.6" ry="6.8" fill="#fff"/><path d="M2 20 Q3 14.5 6.5 14 L13.5 14 Q17 14.5 18 20 Z" fill="#fff"/><rect x="6.5" y="11" width="7" height="5" fill="#fff"/></g></svg>
<div class="a" style="left:1565px;top:861px;font-size:14px;color:#2f5d9a;line-height:21px">Иванченко<br>Валентин</div>
<svg style="left:1539px;top:910px" width="20" height="20" viewBox="0 0 20 20"><defs><clipPath id="cp12"><circle cx="10" cy="10" r="10"/></clipPath></defs><g clip-path="url(#cp12)"><rect width="20" height="20" fill="#ced5e3"/><ellipse cx="9.8" cy="8.6" rx="4.6" ry="6.8" fill="#fff"/><path d="M2 20 Q3 14.5 6.5 14 L13.5 14 Q17 14.5 18 20 Z" fill="#fff"/><rect x="6.5" y="11" width="7" height="5" fill="#fff"/></g></svg>
<div class="a" style="left:1565px;top:909px;font-size:14px;color:#2f5d9a;line-height:21px">Admin Admin</div>
<div class="a" style="left:1685px;top:849px;width:93px;height:109px;overflow:hidden">
<svg style="left:0px;top:13px" width="20" height="20" viewBox="0 0 20 20"><defs><clipPath id="cp13"><circle cx="10" cy="10" r="10"/></clipPath></defs><g clip-path="url(#cp13)"><rect width="20" height="20" fill="#ced5e3"/><ellipse cx="9.8" cy="8.6" rx="4.6" ry="6.8" fill="#fff"/><path d="M2 20 Q3 14.5 6.5 14 L13.5 14 Q17 14.5 18 20 Z" fill="#fff"/><rect x="6.5" y="11" width="7" height="5" fill="#fff"/></g></svg>
<div class="a" style="left:26px;top:12px;font-size:14px;color:#2f5d9a;line-height:21px">Admin Admin</div>
</div>
<div class="a" style="left:1159px;top:627px;width:150px;height:223px;border:3px solid #ff0000;border-radius:4px"></div>
<div class="a" style="left:1829px;top:789px;width:60px;height:60px;border-radius:50%;background:#2b3441;box-shadow:0 0 8px rgba(0,0,0,.18)"></div>
<svg style="left:1846px;top:805px" width="26" height="26" viewBox="0 0 26 26"><path d="M7 21.5 A10 10 0 1 0 3.8 17.5 L2 23.5 Z" fill="none" stroke="#fff" stroke-width="2.4" stroke-linejoin="round"/></svg>
<div class="a" style="left:1829px;top:789px;width:18px;height:18px;border-radius:50%;background:#31b15f;color:#fff;font-size:12.5px;line-height:18px;text-align:center">2</div>
<!-- TABLE_END -->

</body></html>
